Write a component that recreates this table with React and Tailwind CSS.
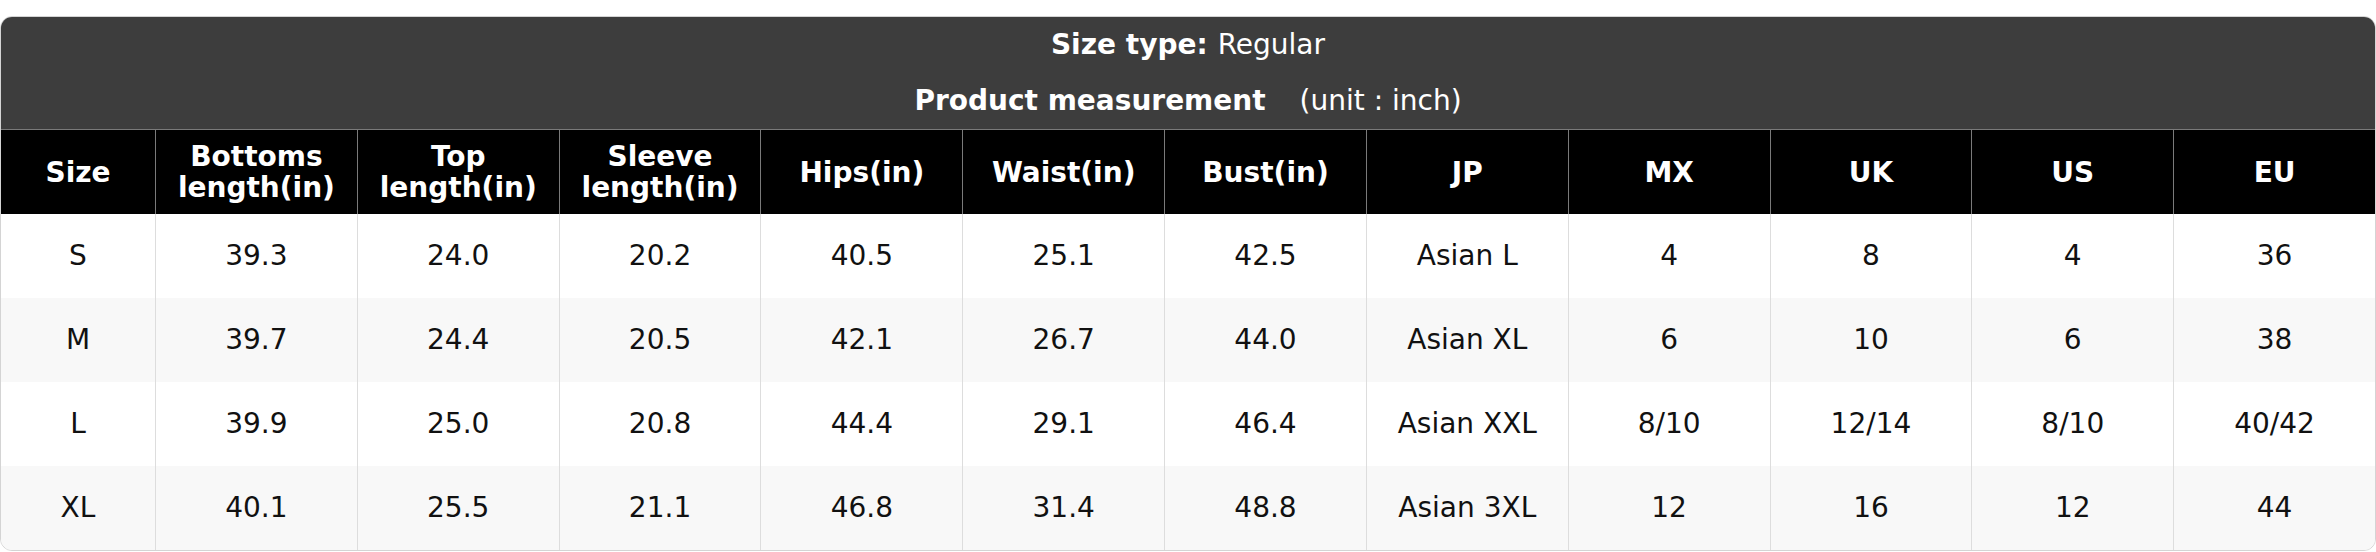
import React from "react";

const headers = [
  ["Size"],
  ["Bottoms", "length(in)"],
  ["Top", "length(in)"],
  ["Sleeve", "length(in)"],
  ["Hips(in)"],
  ["Waist(in)"],
  ["Bust(in)"],
  ["JP"],
  ["MX"],
  ["UK"],
  ["US"],
  ["EU"],
];

const rows = [
  ["S", "39.3", "24.0", "20.2", "40.5", "25.1", "42.5", "Asian L", "4", "8", "4", "36"],
  ["M", "39.7", "24.4", "20.5", "42.1", "26.7", "44.0", "Asian XL", "6", "10", "6", "38"],
  ["L", "39.9", "25.0", "20.8", "44.4", "29.1", "46.4", "Asian XXL", "8/10", "12/14", "8/10", "40/42"],
  ["XL", "40.1", "25.5", "21.1", "46.8", "31.4", "48.8", "Asian 3XL", "12", "16", "12", "44"],
];

export default function App() {
  return (
    <div
      className="w-[2376px] h-[552px] bg-white pt-[16px]"
      style={{ fontFamily: '"DejaVu Sans", Verdana, sans-serif' }}
    >
      <div className="w-full rounded-[12px] overflow-hidden border border-[#d4d4d4] bg-white">
        <div className="bg-[#3d3d3d] text-white text-[28px]">
          <div className="h-[56px] flex items-center justify-center">
            <span className="font-bold">Size type:</span>
            <span className="ml-[10px]">Regular</span>
          </div>
          <div className="h-[56px] flex items-center justify-center">
            <span className="font-bold">Product measurement</span>
            <span className="ml-[34px]">(unit : inch)</span>
          </div>
        </div>
        <div className="grid grid-cols-[154px_repeat(11,minmax(0,1fr))] border-t border-[#7a7a7a] bg-black">
          {headers.map((h, i) => (
            <div
              key={i}
              className={`h-[84px] flex flex-col items-center justify-center text-white font-bold text-[28px] leading-[31px] text-center ${
                i > 0 ? "border-l border-[#7a7a7a]" : ""
              }`}
            >
              {h.map((line, j) => (
                <span key={j}>{line}</span>
              ))}
            </div>
          ))}
        </div>
        {rows.map((r, ri) => (
          <div
            key={ri}
            className={`grid grid-cols-[154px_repeat(11,minmax(0,1fr))] ${
              ri % 2 === 1 ? "bg-[#f8f8f8]" : "bg-white"
            }`}
          >
            {r.map((c, ci) => (
              <div
                key={ci}
                className={`h-[84px] flex items-center justify-center text-[28px] text-[#111111] ${
                  ci > 0 ? "border-l border-[#dddddd]" : ""
                }`}
              >
                {c}
              </div>
            ))}
          </div>
        ))}
      </div>
    </div>
  );
}
